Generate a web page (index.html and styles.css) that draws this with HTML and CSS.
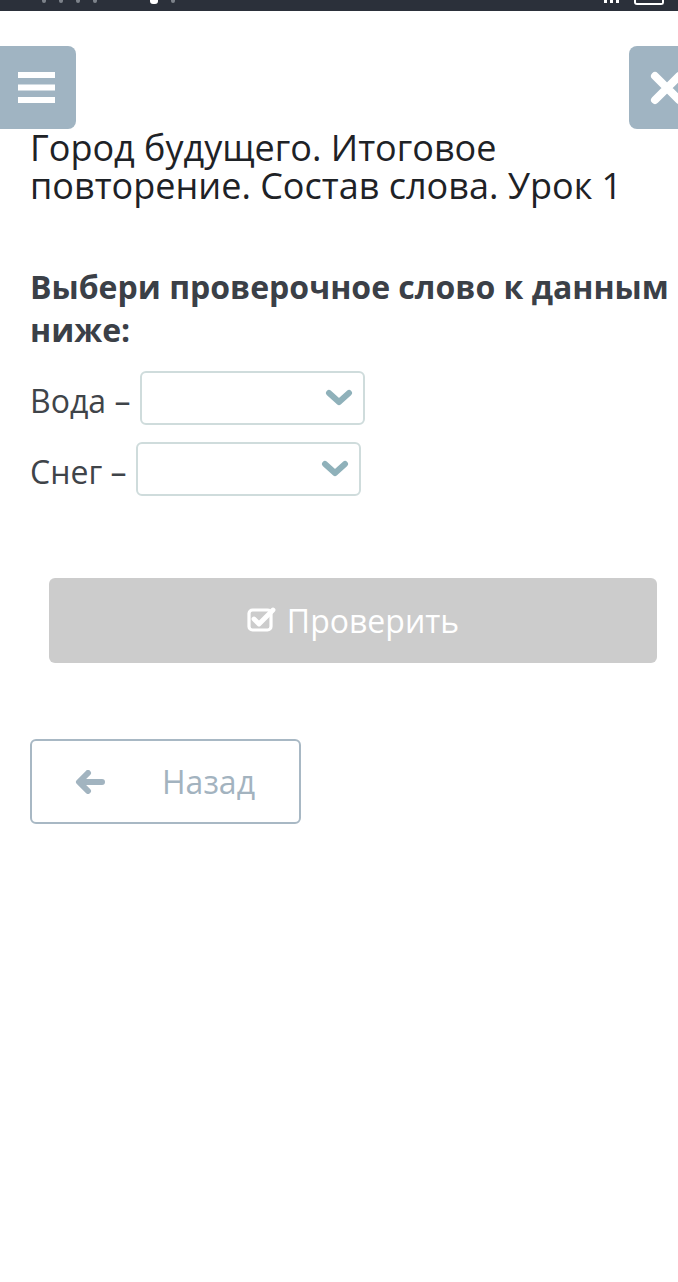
FILE: index.html
```html
<!DOCTYPE html>
<html lang="ru">
<head>
<meta charset="utf-8">
<title>Город будущего</title>
<link rel="stylesheet" href="styles.css">
</head>
<body>
<div class="status">
  <div class="status-left"><span class="dot"></span><span class="dot"></span><span class="dot"></span><span class="dot"></span><span class="sq"></span><span class="dot"></span></div>
  <div class="status-right"><span class="sig"></span><span class="sig"></span><span class="sig"></span><span class="bat"></span></div>
</div>
<header class="topbar">
  <button class="icon-btn menu" aria-label="Меню">
    <svg width="37" height="31" viewBox="0 0 37 31"><rect x="0" y="0" width="37" height="6" fill="#fff"/><rect x="0" y="12.5" width="37" height="6" fill="#fff"/><rect x="0" y="25" width="37" height="6" fill="#fff"/></svg>
  </button>
  <button class="icon-btn close" aria-label="Закрыть">
    <svg width="34" height="34" viewBox="0 0 34 34"><path d="M5 5 L29 29 M29 5 L5 29" stroke="#fff" stroke-width="8" stroke-linecap="round"/></svg>
  </button>
</header>
<main class="content">
  <h1 class="title">Город будущего. Итоговое повторение. Состав слова. Урок 1</h1>
  <p class="question">Выбери проверочное слово к данным ниже:</p>
  <div class="row">
    <span class="label">Вода –</span>
    <div class="select">
      <svg width="28" height="20" viewBox="0 0 28 20"><path d="M4 5 L14 14 L24 5" fill="none" stroke="#8fb1ba" stroke-width="6" stroke-linecap="round" stroke-linejoin="round"/></svg>
    </div>
  </div>
  <div class="row row2">
    <span class="label">Снег –</span>
    <div class="select">
      <svg width="28" height="20" viewBox="0 0 28 20"><path d="M4 5 L14 14 L24 5" fill="none" stroke="#8fb1ba" stroke-width="6" stroke-linecap="round" stroke-linejoin="round"/></svg>
    </div>
  </div>
  <button class="check-btn">
    <svg class="check-icon" width="30" height="26" viewBox="0 0 30 26"><rect x="2" y="4" width="22" height="20" rx="3.5" fill="none" stroke="#fff" stroke-width="3.2"/><path d="M7 13 L12 18 L26 4" fill="none" stroke="#fff" stroke-width="4.8" stroke-linecap="round" stroke-linejoin="round"/></svg>
    <span>Проверить</span>
  </button>
  <button class="back-btn">
    <svg width="30" height="24" viewBox="0 0 30 24"><path d="M13 3 L4 12 L13 21 M5 12 L27 12" fill="none" stroke="#a2b4c0" stroke-width="6" stroke-linecap="round" stroke-linejoin="round"/></svg>
    <span>Назад</span>
  </button>
</main>
</body>
</html>
```
FILE: styles.css
```css
html, body {
  margin: 0;
  padding: 0;
  background: #fff;
  overflow-x: hidden;
}
body {
  font-family: "Open Sans", "Noto Sans", sans-serif;
  width: 678px;
  min-height: 1282px;
}
.status {
  height: 11px;
  background: #2b303a;
  display: flex;
  justify-content: space-between;
  align-items: flex-start;
  overflow: hidden;
}
.status-left {
  display: flex;
  gap: 13px;
  padding-left: 42px;
}
.status-left .dot {
  width: 4px;
  height: 3px;
  background: #7d828a;
  border-radius: 0 0 2px 2px;
}
.status-left .sq {
  width: 8px;
  height: 4px;
  background: #fff;
  border-radius: 0 0 3px 3px;
  margin-left: 40px;
}
.status-right {
  display: flex;
  gap: 3px;
  padding-right: 14px;
  align-items: flex-start;
}
.status-right .sig {
  width: 3px;
  height: 3px;
  background: #fff;
}
.status-right .bat {
  width: 26px;
  height: 3px;
  border: 2px solid #fff;
  border-top: none;
  border-radius: 0 0 3px 3px;
  margin-left: 12px;
}
.topbar {
  display: flex;
  justify-content: space-between;
  margin-top: 35px;
  margin-right: -27px;
}
.icon-btn {
  width: 76px;
  height: 83px;
  border: none;
  border-radius: 8px;
  background: #a0b4c2;
  padding: 0;
  display: flex;
  align-items: center;
  justify-content: center;
}
.menu {
  border-radius: 0 8px 8px 0;
  padding-right: 4px;
}
.content {
  padding: 0 0 0 30px;
}
.title {
  margin: 0;
  font-weight: 400;
  font-size: 36px;
  line-height: 38px;
  color: #1e2226;
  width: 620px;
}
.question {
  margin: 60px 0 0 0;
  font-weight: 700;
  font-size: 32px;
  line-height: 43px;
  color: #3b4047;
  width: 670px;
}
.row {
  display: flex;
  align-items: center;
  gap: 10px;
  margin-top: 20px;
}
.row2 {
  margin-top: 17px;
}
.label {
  font-size: 32px;
  color: #3f4449;
  line-height: 40px;
  padding-top: 6px;
}
.select {
  border: 2px solid #cfdcdc;
  border-radius: 6px;
  display: flex;
  align-items: center;
  justify-content: flex-end;
  padding-right: 10px;
  box-sizing: border-box;
  width: 225px;
  height: 54px;
}
.check-btn {
  margin: 82px 0 0 19px;
  width: 608px;
  height: 85px;
  border: none;
  border-radius: 6px;
  background: #cccccc;
  color: #fff;
  font-family: "Open Sans", "Noto Sans", sans-serif;
  font-size: 32px;
  display: flex;
  align-items: center;
  justify-content: center;
  gap: 10px;
  padding: 0;
}
.check-icon {
  flex: none;
  width: 30px;
  height: 26px;
  margin-top: -3px;
}
.back-btn {
  margin-top: 76px;
  width: 271px;
  height: 85px;
  border: 2px solid #a8b8c4;
  border-radius: 6px;
  background: #fff;
  color: #a3b3bf;
  font-family: "Open Sans", "Noto Sans", sans-serif;
  font-size: 32px;
  display: flex;
  align-items: center;
  padding: 0 0 0 43px;
  gap: 57px;
  box-sizing: border-box;
}
```
